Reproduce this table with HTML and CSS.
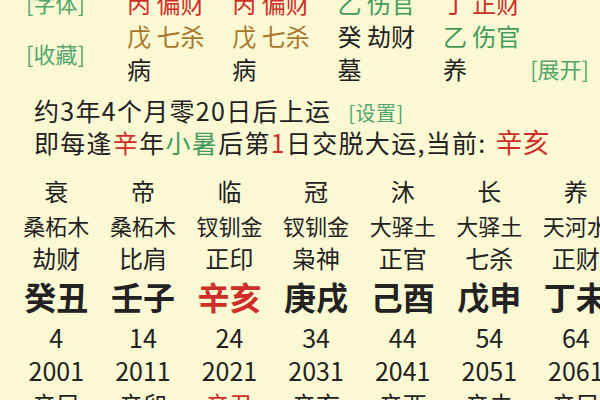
FILE: index.html
```html
<!DOCTYPE html>
<html lang="zh">
<head>
<meta charset="utf-8">
<link rel="stylesheet" href="styles.css">
</head>
<body>
<div class="page">
  <section class="pillars">
    <div class="side">
      <span class="link">[字体]</span>
      <span class="link">[收藏]</span>
    </div>
    <div class="cols">
      <div class="col">
        <div class="cell red">丙 偏财</div>
        <div class="cell brown">戊 七杀</div>
        <div class="cell">病</div>
      </div>
      <div class="col">
        <div class="cell red">丙 偏财</div>
        <div class="cell brown">戊 七杀</div>
        <div class="cell">病</div>
      </div>
      <div class="col">
        <div class="cell green">乙 伤官</div>
        <div class="cell">癸 劫财</div>
        <div class="cell">墓</div>
      </div>
      <div class="col">
        <div class="cell red">丁 正财</div>
        <div class="cell green">乙 伤官</div>
        <div class="cell">养</div>
      </div>
    </div>
    <div class="side right">
      <span class="link">[展开]</span>
    </div>
  </section>

  <section class="info">
    <p class="line">约3年4个月零20日后上运 <span class="link small">[设置]</span></p>
    <p class="line">即每逢<span class="red">辛</span>年<span class="green">小暑</span>后第<span class="red">1</span>日交脱大运,当前: <span class="red cur">辛亥</span></p>
  </section>

  <section class="dayun">
    <div class="row r-stage"><span>衰</span><span>帝</span><span>临</span><span>冠</span><span>沐</span><span>长</span><span>养</span></div>
    <div class="row r-nayin"><span>桑柘木</span><span>桑柘木</span><span>钗钏金</span><span>钗钏金</span><span>大驿土</span><span>大驿土</span><span>天河水</span></div>
    <div class="row r-god"><span>劫财</span><span>比肩</span><span>正印</span><span>枭神</span><span>正官</span><span>七杀</span><span>正财</span></div>
    <div class="row r-gz"><span>癸丑</span><span>壬子</span><span class="red">辛亥</span><span>庚戌</span><span>己酉</span><span>戊申</span><span>丁未</span></div>
    <div class="row r-age"><span>4</span><span>14</span><span>24</span><span>34</span><span>44</span><span>54</span><span>64</span></div>
    <div class="row r-year"><span>2001</span><span>2011</span><span>2021</span><span>2031</span><span>2041</span><span>2051</span><span>2061</span></div>
    <div class="row r-ln"><span>辛巳</span><span>辛卯</span><span class="red">辛丑</span><span>辛亥</span><span>辛酉</span><span>辛未</span><span>辛巳</span></div>
  </section>
</div>
</body>
</html>
```

FILE: styles.css
```css
html, body {
  margin: 0;
  padding: 0;
  background: #fbf8d4;
  overflow: hidden;
}
body {
  width: 600px;
  height: 400px;
  font-family: "Noto Sans CJK SC", "Noto Sans", sans-serif;
  color: #222;
}
.page {
  width: 620px;
}
.red { color: #cf2f28; }
.green { color: #439c5a; }
.brown { color: #a7772b; }
.link { color: #52a66c; font-size: 22px; }

.pillars {
  display: flex;
  margin-top: -14px;
  height: 96px;
}
.side {
  width: 127px;
  padding-left: 26px;
  box-sizing: border-box;
  display: flex;
  flex-direction: column;
  gap: 21px;
  padding-top: 1px;
  line-height: 30px;
}
.side.right {
  width: auto;
  padding: 66px 0 0 0;
  margin-left: -18px;
  line-height: 33px;
}
.cols {
  display: flex;
}
.col {
  width: 105.3px;
  display: flex;
  flex-direction: column;
}
.cell {
  font-size: 24px;
  line-height: 33px;
  height: 33px;
  white-space: nowrap;
}

.info {
  padding-left: 34px;
  margin-top: 13px;
}
.line {
  margin: 0;
  font-size: 25px;
  letter-spacing: 1.3px;
  line-height: 31px;
  height: 31px;
  white-space: nowrap;
}
.link.small { font-size: 20px; margin-left: 10px; letter-spacing: 0.5px; }
.cur { font-size: 27px; letter-spacing: 0; margin-left: 2px; }

.dayun {
  margin-top: 17px;
  padding-left: 13px;
}
.row {
  display: grid;
  grid-template-columns: repeat(7, 86.6px);
  text-align: center;
  white-space: nowrap;
}
.r-stage { font-size: 24px; line-height: 34px; height: 34px; }
.r-nayin { font-size: 22px; line-height: 34px; height: 34px; }
.r-god { font-size: 24px; line-height: 32px; height: 32px; }
.r-gz { font-size: 32px; font-weight: bold; line-height: 44px; height: 44px; }
.r-age { font-size: 25px; line-height: 38px; height: 38px; }
.r-year { font-size: 25px; line-height: 29px; height: 29px; }
.r-ln { font-size: 24px; line-height: 37px; height: 37px; }
```
